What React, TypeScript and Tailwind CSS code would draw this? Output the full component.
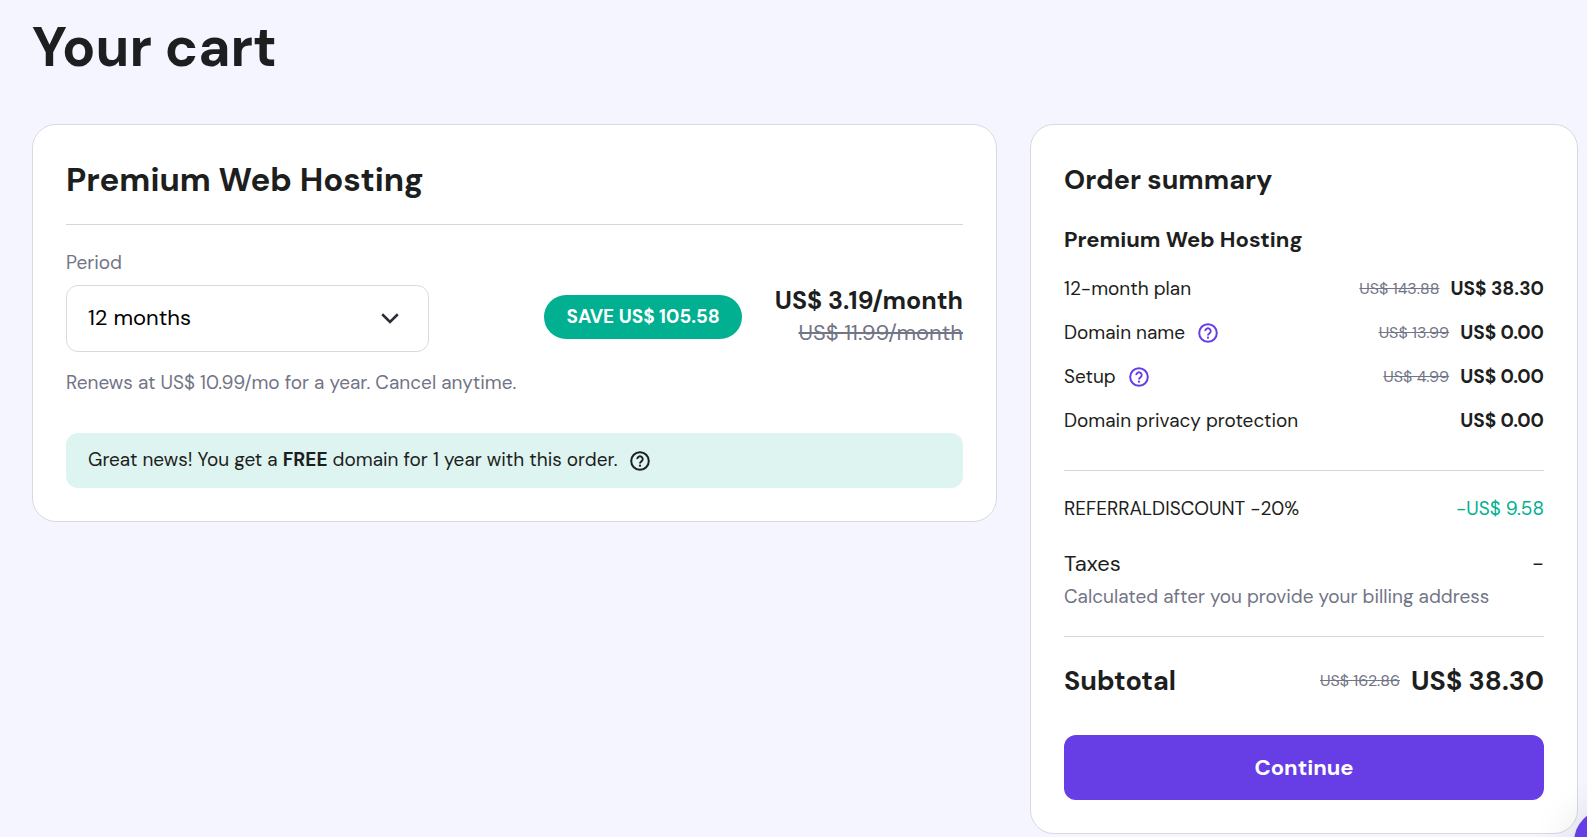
type LineItem = {
  label: string;
  oldPrice?: string;
  price: string;
  help?: string;
};

const items: LineItem[] = [
  { label: "12-month plan", oldPrice: "US$ 143.88", price: "US$ 38.30" },
  { label: "Domain name", oldPrice: "US$ 13.99", price: "US$ 0.00", help: "About the domain name" },
  { label: "Setup", oldPrice: "US$ 4.99", price: "US$ 0.00", help: "About the setup" },
  { label: "Domain privacy protection", price: "US$ 0.00" },
];

function HelpButton({ label }: { label: string }) {
  return (
    <button type="button" aria-label={label} className="flex size-5 shrink-0 items-center justify-center">
      <svg viewBox="0 0 20 20" className="size-5" fill="none" stroke="currentColor" strokeWidth="2" aria-hidden="true">
        <circle cx="10" cy="10" r="8.800" />
        <path d="M7.300 8.100a2.700 2.700 0 1 1 4.300 2.100c-.9.7-1.600 1.100-1.600 2.200" strokeWidth="1.900" />
        <circle cx="10" cy="14.700" r="1.150" fill="currentColor" stroke="none" />
      </svg>
    </button>
  );
}

function PlanCard() {
  return (
    <section className="rounded-3xl border border-[#d8dae0] bg-white p-[33px]">
      <h2 className="text-[33px] leading-[44px] font-bold">Premium Web Hosting</h2>
      <hr className="mt-[22px] border-[#d5d5e0]" />
      <label htmlFor="period" className="mt-6 block text-[19px] leading-7 text-[#727586]">
        Period
      </label>
      <div className="mt-2 flex items-center">
        <div className="grid w-[363px] items-center">
          <select
            id="period"
            defaultValue="12"
            className="col-start-1 row-start-1 h-[67px] w-full appearance-none rounded-xl border border-[#d8dae0] bg-white px-[21px] pb-0.5 text-[22px] text-black"
          >
            <option value="12">12 months</option>
            <option value="24">24 months</option>
            <option value="48">48 months</option>
          </select>
          <svg
            viewBox="0 0 18 11"
            className="pointer-events-none col-start-1 row-start-1 mr-[30px] h-[11px] w-[18px] justify-self-end"
            fill="none"
            stroke="#2f2b3a"
            strokeWidth="2.6"
            aria-hidden="true"
          >
            <path d="M1.200 1.300 9 8.900l7.800-7.600" />
          </svg>
        </div>
        <div className="ml-auto flex items-center gap-[33px] pb-[3px]">
          <span className="rounded-full bg-[#00b090] px-[22px] text-[19px] leading-[44px] font-bold whitespace-nowrap text-white">
            SAVE US$ 105.58
          </span>
          <div className="text-right whitespace-nowrap">
            <p className="text-[25px] leading-8 font-bold">US$ 3.19/month</p>
            <p className="text-[22px] leading-8 text-[#727586]">
              <del className="decoration-2">US$ 11.99/month</del>
            </p>
          </div>
        </div>
      </div>
      <p className="mt-[17px] text-[19px] leading-7 text-[#727586]">
        Renews at US$ 10.99/mo for a year. Cancel anytime.
      </p>
      <div className="mt-9 flex items-center gap-[13px] rounded-xl bg-[#def4f0] px-[22px] py-3 text-[19px] leading-[29px]">
        <p className="pb-0.5">
          Great news! You get a <strong className="font-bold">FREE</strong> domain for 1 year with this order.
        </p>
        <HelpButton label="About the free domain" />
      </div>
    </section>
  );
}

function OrderSummary() {
  return (
    <section className="rounded-3xl border border-[#d8dae0] bg-white p-[33px]">
      <h2 className="text-[27px] leading-[44px] font-bold">Order summary</h2>
      <h3 className="mt-[22px] text-[22px] leading-8 font-bold">Premium Web Hosting</h3>
      <ul className="mt-[11px] text-[19px]">
        {items.map((item) => (
          <li key={item.label} className="flex h-11 items-center justify-between">
            <span className="flex items-center gap-[13px]">
              {item.label}
              {item.help && (
                <span className="text-[#673de6]">
                  <HelpButton label={item.help} />
                </span>
              )}
            </span>
            <span className="flex items-center gap-[11px] whitespace-nowrap">
              {item.oldPrice && <del className="text-[16px] text-[#727586]">{item.oldPrice}</del>}
              <strong className="font-bold">{item.price}</strong>
            </span>
          </li>
        ))}
      </ul>
      <hr className="mt-[27px] border-[#d5d5e0]" />
      <div className="mt-6 flex justify-between text-[19px] leading-7">
        <span>REFERRALDISCOUNT -20%</span>
        <span className="text-[#00b090]">-US$ 9.58</span>
      </div>
      <div className="mt-[25px] flex justify-between text-[22px] leading-8">
        <span>Taxes</span>
        <span>-</span>
      </div>
      <p className="mt-[3px] text-[19px] leading-7 text-[#727586]">
        Calculated after you provide your billing address
      </p>
      <hr className="mt-[25px] border-[#d5d5e0]" />
      <div className="mt-6 flex items-center justify-between leading-10">
        <span className="text-[27px] font-bold">Subtotal</span>
        <span className="flex items-center gap-[11px] whitespace-nowrap">
          <del className="text-[16px] text-[#727586]">US$ 162.86</del>
          <strong className="text-[27px] font-bold">US$ 38.30</strong>
        </span>
      </div>
      <button
        type="button"
        className="mt-[34px] block h-[65px] w-full rounded-xl bg-[#673de6] text-[22px] font-bold text-white"
      >
        Continue
      </button>
    </section>
  );
}

export default function App() {
  return (
    <main className="min-h-screen bg-[#f4f5ff] pr-[9px] pl-8 font-['DM_Sans','Inter',sans-serif] text-[#1d1e20]">
      <h1 className="pt-[15px] pb-[45px] text-[55px] leading-[64px] font-bold">Your cart</h1>
      <div className="grid grid-cols-1 items-start gap-[33px] lg:grid-cols-[minmax(0,1fr)_548px]">
        <PlanCard />
        <OrderSummary />
      </div>
      <button
        type="button"
        aria-label="Open chat"
        className="fixed right-[-53px] bottom-[-38px] size-[66px] rounded-full bg-[#673de6] shadow-[0_4px_44px_rgba(29,30,32,0.16)]"
      />
    </main>
  );
}
